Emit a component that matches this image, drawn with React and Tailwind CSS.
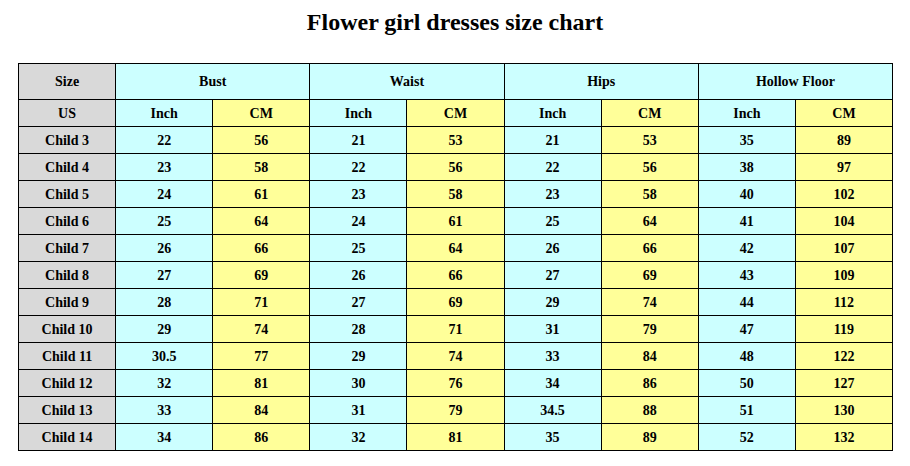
import React from "react";

const rows = [
  ["Child 3", "22", "56", "21", "53", "21", "53", "35", "89"],
  ["Child 4", "23", "58", "22", "56", "22", "56", "38", "97"],
  ["Child 5", "24", "61", "23", "58", "23", "58", "40", "102"],
  ["Child 6", "25", "64", "24", "61", "25", "64", "41", "104"],
  ["Child 7", "26", "66", "25", "64", "26", "66", "42", "107"],
  ["Child 8", "27", "69", "26", "66", "27", "69", "43", "109"],
  ["Child 9", "28", "71", "27", "69", "29", "74", "44", "112"],
  ["Child 10", "29", "74", "28", "71", "31", "79", "47", "119"],
  ["Child 11", "30.5", "77", "29", "74", "33", "84", "48", "122"],
  ["Child 12", "32", "81", "30", "76", "34", "86", "50", "127"],
  ["Child 13", "33", "84", "31", "79", "34.5", "88", "51", "130"],
  ["Child 14", "34", "86", "32", "81", "35", "89", "52", "132"],
];

const gray = "bg-[#d9d9d9]";
const cyan = "bg-[#ccffff]";
const yellow = "bg-[#ffff99]";
const cell = "border border-black text-center font-bold text-[14px] p-0";

export default function App() {
  return (
    <div className="w-[910px] h-[466px] bg-white pt-[8px]" style={{ fontFamily: '"Liberation Serif", "Times New Roman", serif' }}>
      <h1 className="text-center font-bold text-[24px] leading-[28px] text-black">Flower girl dresses size chart</h1>
      <table className="ml-[18px] mt-[27px] w-[875px] table-fixed border-collapse text-black">
        <tbody>
          <tr className="h-[36px]">
            <td className={`${cell} ${gray}`}>Size</td>
            <td colSpan={2} className={`${cell} ${cyan}`}>Bust</td>
            <td colSpan={2} className={`${cell} ${cyan}`}>Waist</td>
            <td colSpan={2} className={`${cell} ${cyan}`}>Hips</td>
            <td colSpan={2} className={`${cell} ${cyan}`}>Hollow Floor</td>
          </tr>
          <tr className="h-[27px]">
            <td className={`${cell} ${gray}`}>US</td>
            {[0, 1, 2, 3].map((i) => (
              <React.Fragment key={i}>
                <td className={`${cell} ${cyan}`}>Inch</td>
                <td className={`${cell} ${yellow}`}>CM</td>
              </React.Fragment>
            ))}
          </tr>
          {rows.map((r) => (
            <tr key={r[0]} className="h-[27px]">
              {r.map((v, j) => (
                <td key={j} className={`${cell} ${j === 0 ? gray : j % 2 === 1 ? cyan : yellow}`}>{v}</td>
              ))}
            </tr>
          ))}
        </tbody>
      </table>
    </div>
  );
}
